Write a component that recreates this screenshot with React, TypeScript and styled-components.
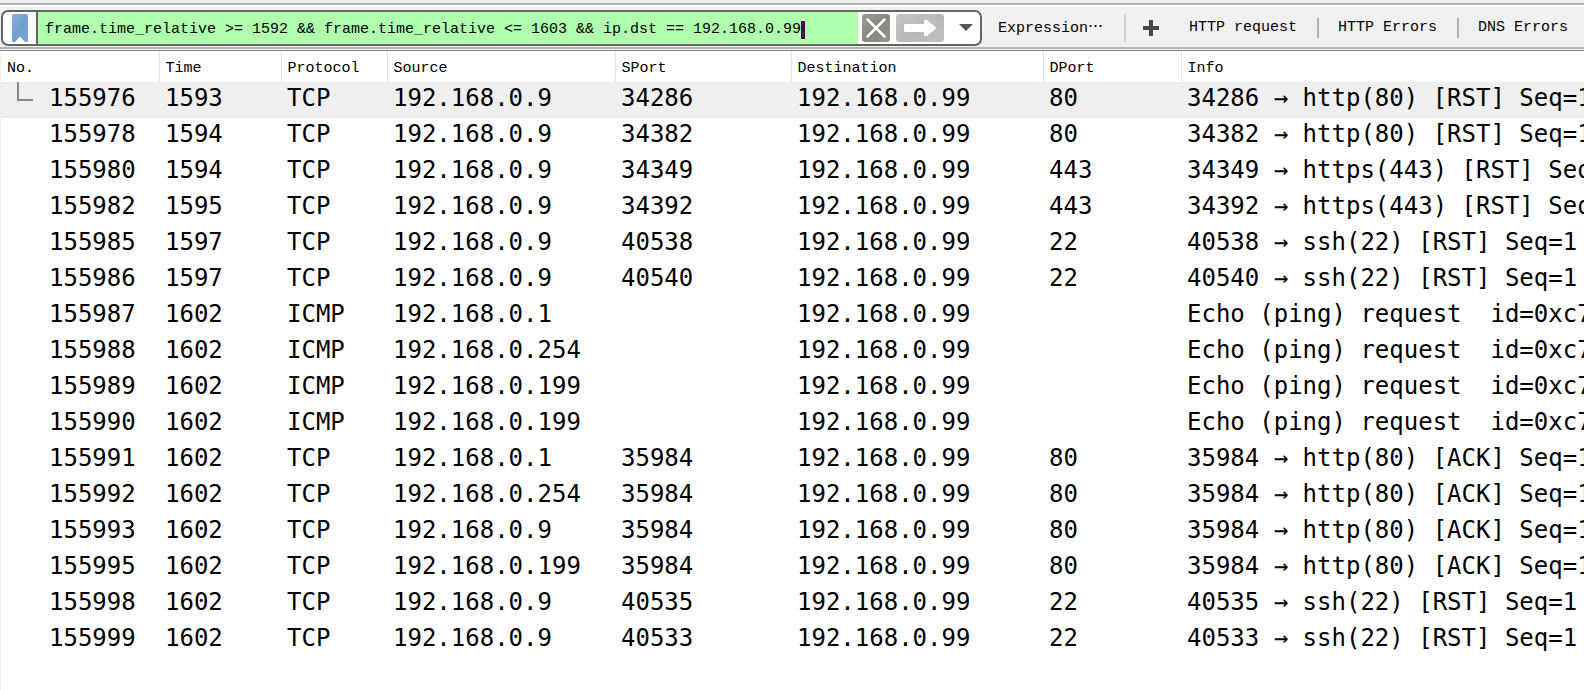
import React from 'react';
import styled, { createGlobalStyle } from 'styled-components';

const Global = createGlobalStyle`
  * { box-sizing: border-box; }
  html, body { margin: 0; background: #fff; color: #000; }
  body { overflow-x: hidden; }
`;

const headFont = '"Liberation Mono", "Courier New", monospace';
const dataFont = '"DejaVu Sans Mono", Consolas, monospace';

const Page = styled.div`
  display: flex;
  flex-direction: column;
  min-height: 100vh;
`;

const Toolbar = styled.header`
  display: flex;
  align-items: center;
  height: 51px;
  padding: 5px 16px 0 1px;
  background: linear-gradient(#b4b4b4 0 2px, #fff 2px 4px, #f0f0f0 4px 44px, #b4b4b4 44px 46px, #f0f0f0 46px 47px, #828790 47px) 0 3px no-repeat #f0f0f0;
  font: 15px/20px ${headFont};
  white-space: nowrap;
`;

const FilterBox = styled.form`
  display: flex;
  flex: 1;
  min-width: 0;
  height: 36px;
  margin: 0;
  border: 2px solid #646464;
  border-radius: 7px;
  background: #fff;
  overflow: hidden;
`;

const IconButton = styled.button<{ $w: number }>`
  display: flex;
  align-items: center;
  justify-content: center;
  flex: none;
  width: ${(p) => p.$w}px;
  padding: 0;
  border: 0;
  background: none;
`;

const MenuButton = styled(IconButton)`
  padding-left: 6px;
`;

const FilterField = styled.label`
  display: flex;
  align-items: center;
  flex: 1;
  min-width: 0;
  padding: 3px 0 0 7px;
  border-left: 2px solid #646464;
  background: #afffaf;
`;

const FilterInput = styled.input`
  field-sizing: content;
  min-width: 0;
  padding: 0;
  border: 0;
  outline: 0;
  background: none;
  color: #000;
  font: inherit;
`;

const Caret = styled.span`
  flex: none;
  width: 4px;
  height: 18px;
  background: #500050;
`;

const Shortcuts = styled.nav`
  display: flex;
  align-items: center;
  flex: none;
  padding-left: 16px;
`;

const TextButton = styled.button`
  padding: 0;
  border: 0;
  background: none;
  color: #000;
  font: inherit;
`;

const Ellipsis = styled.span`
  font-family: "Noto Sans CJK SC", sans-serif;
  line-height: 1;
`;

const AddButton = styled(IconButton)`
  margin-right: 30px;
`;

const Divider = styled.span<{ $tall?: boolean }>`
  width: 2px;
  height: ${(p) => (p.$tall ? 28 : 20)}px;
  margin: ${(p) => (p.$tall ? '0 17px 0 21px' : '0 19px 0 20px')};
  background: ${(p) => (p.$tall ? '#d0d0d0' : '#b0b0b0')};
`;

const PacketPane = styled.main`
  flex: 1;
  border-left: 1px solid #f0f0f0;
`;

const PacketTable = styled.table`
  width: 100%;
  border-collapse: collapse;
  table-layout: fixed;
`;

const Head = styled.th`
  height: 31px;
  padding: 4px 0 0 6px;
  border-right: 1px solid #e5e5e5;
  font: 15px/20px ${headFont};
  text-align: left;
  &:last-child { border-right: 0; }
`;

const Row = styled.tr<{ $current?: boolean }>`
  height: 36px;
  background: ${(p) => (p.$current ? '#efefef' : '#fff')};
`;

const Cell = styled.td`
  padding: 0 0 4px 6px;
  font: 24px/32px ${dataFont};
  white-space: pre;
  overflow: hidden;
`;

const NumberCell = styled(Cell)`
  padding-left: 0;
`;

const NumberContent = styled.div`
  display: flex;
  gap: 16px;
  padding-left: 16px;
`;

const Branch = styled.svg`
  width: 16px;
  height: 32px;
`;

const columns: [string, number?][] = [
  ['No.', 158], ['Time', 122], ['Protocol', 106], ['Source', 228],
  ['SPort', 176], ['Destination', 252], ['DPort', 138], ['Info'],
];

const target = '192.168.0.99';
const ping = 'Echo (ping) request  id=0xc7';
const rows: string[][] = [
  ['155976', '1593', 'TCP', '192.168.0.9', '34286', target, '80', '34286 → http(80) [RST] Seq=1'],
  ['155978', '1594', 'TCP', '192.168.0.9', '34382', target, '80', '34382 → http(80) [RST] Seq=1'],
  ['155980', '1594', 'TCP', '192.168.0.9', '34349', target, '443', '34349 → https(443) [RST] Seq'],
  ['155982', '1595', 'TCP', '192.168.0.9', '34392', target, '443', '34392 → https(443) [RST] Seq'],
  ['155985', '1597', 'TCP', '192.168.0.9', '40538', target, '22', '40538 → ssh(22) [RST] Seq=1'],
  ['155986', '1597', 'TCP', '192.168.0.9', '40540', target, '22', '40540 → ssh(22) [RST] Seq=1'],
  ['155987', '1602', 'ICMP', '192.168.0.1', '', target, '', ping],
  ['155988', '1602', 'ICMP', '192.168.0.254', '', target, '', ping],
  ['155989', '1602', 'ICMP', '192.168.0.199', '', target, '', ping],
  ['155990', '1602', 'ICMP', '192.168.0.199', '', target, '', ping],
  ['155991', '1602', 'TCP', '192.168.0.1', '35984', target, '80', '35984 → http(80) [ACK] Seq=1'],
  ['155992', '1602', 'TCP', '192.168.0.254', '35984', target, '80', '35984 → http(80) [ACK] Seq=1'],
  ['155993', '1602', 'TCP', '192.168.0.9', '35984', target, '80', '35984 → http(80) [ACK] Seq=1'],
  ['155995', '1602', 'TCP', '192.168.0.199', '35984', target, '80', '35984 → http(80) [ACK] Seq=1'],
  ['155998', '1602', 'TCP', '192.168.0.9', '40535', target, '22', '40535 → ssh(22) [RST] Seq=1'],
  ['155999', '1602', 'TCP', '192.168.0.9', '40533', target, '22', '40533 → ssh(22) [RST] Seq=1'],
];

export default function App() {
  return (
    <Page>
      <Global />
      <Toolbar>
        <FilterBox onSubmit={(e) => e.preventDefault()}>
          <IconButton $w={33} type="button" aria-label="Filter bookmarks">
            <svg width="16" height="28" viewBox="0 0 16 28">
              <defs>
                <linearGradient id="mark" x2="1" y2="1">
                  <stop stopColor="#86aedb" />
                  <stop offset="0.5" stopColor="#729fcf" />
                  <stop offset="1" stopColor="#7aa3d4" />
                </linearGradient>
              </defs>
              <path d="M0 1.5Q0 0 1.5 0H14.5Q16 0 16 1.5V26.5Q16 28 14.5 28H13L8 22.5L3 28H1.5Q0 28 0 26.5Z" fill="url(#mark)" />
            </svg>
          </IconButton>
          <FilterField>
            <FilterInput
              aria-label="Display filter"
              spellCheck={false}
              defaultValue="frame.time_relative >= 1592 && frame.time_relative <= 1603 && ip.dst == 192.168.0.99"
            />
            <Caret />
          </FilterField>
          <IconButton $w={36} type="button" aria-label="Clear filter">
            <svg width="28" height="28" viewBox="0 0 28 28">
              <defs>
                <linearGradient id="clear" x2="1" y2="1">
                  <stop stopColor="#999b95" />
                  <stop offset="0.5" stopColor="#868881" />
                  <stop offset="1" stopColor="#92948e" />
                </linearGradient>
              </defs>
              <rect width="28" height="28" rx="3" fill="url(#clear)" />
              <path d="M5.5 5.5L22.5 22.5M22.5 5.5L5.5 22.5" stroke="#fff" strokeWidth="2.5" strokeLinecap="round" />
            </svg>
          </IconButton>
          <IconButton $w={52} type="submit" aria-label="Apply filter">
            <svg width="48" height="28" viewBox="0 0 48 28">
              <defs>
                <linearGradient id="apply" x2="1" y2="1">
                  <stop stopColor="#c6c6c6" />
                  <stop offset="0.5" stopColor="#b9b9b9" />
                  <stop offset="1" stopColor="#c0c0c0" />
                </linearGradient>
              </defs>
              <rect width="48" height="28" rx="3" fill="url(#apply)" />
              <path d="M9 10H28V7Q28 5 31 6L39 12.5Q41 14 39 15.5L31 22Q28 23 28 21V18H9Q8 18 8 17V11Q8 10 9 10Z" fill="#fff" />
            </svg>
          </IconButton>
          <MenuButton $w={34} type="button" aria-label="Recent filters">
            <svg width="14" height="8" viewBox="0 0 14 8"><path d="M0 0H14L7 7Z" fill="#555753" /></svg>
          </MenuButton>
        </FilterBox>
        <Shortcuts>
          <TextButton type="button">Expression<Ellipsis lang="zh-CN">…</Ellipsis></TextButton>
          <Divider $tall />
          <AddButton $w={16} type="button" aria-label="Add filter button">
            <svg width="16" height="16" viewBox="0 0 16 16"><path d="M6 0H10V6H16V10H10V16H6V10H0V6H6Z" fill="#464646" /></svg>
          </AddButton>
          <TextButton type="button">HTTP request</TextButton>
          <Divider />
          <TextButton type="button">HTTP Errors</TextButton>
          <Divider />
          <TextButton type="button">DNS Errors</TextButton>
        </Shortcuts>
      </Toolbar>
      <PacketPane>
        <PacketTable>
          <colgroup>{columns.map(([name, width]) => <col key={name} width={width} />)}</colgroup>
          <thead><tr>{columns.map(([name]) => <Head key={name} scope="col">{name}</Head>)}</tr></thead>
          <tbody>
            {rows.map(([no, ...cells], i) => (
              <Row key={no} $current={i === 0}>
                <NumberCell>
                  <NumberContent>
                    <Branch aria-hidden="true">{i === 0 && <path d="M1 0V18H16" fill="none" stroke="#888" strokeWidth="2" />}</Branch>
                    {no}
                  </NumberContent>
                </NumberCell>
                {cells.map((text, j) => <Cell key={j}>{text}</Cell>)}
              </Row>
            ))}
          </tbody>
        </PacketTable>
      </PacketPane>
    </Page>
  );
}
